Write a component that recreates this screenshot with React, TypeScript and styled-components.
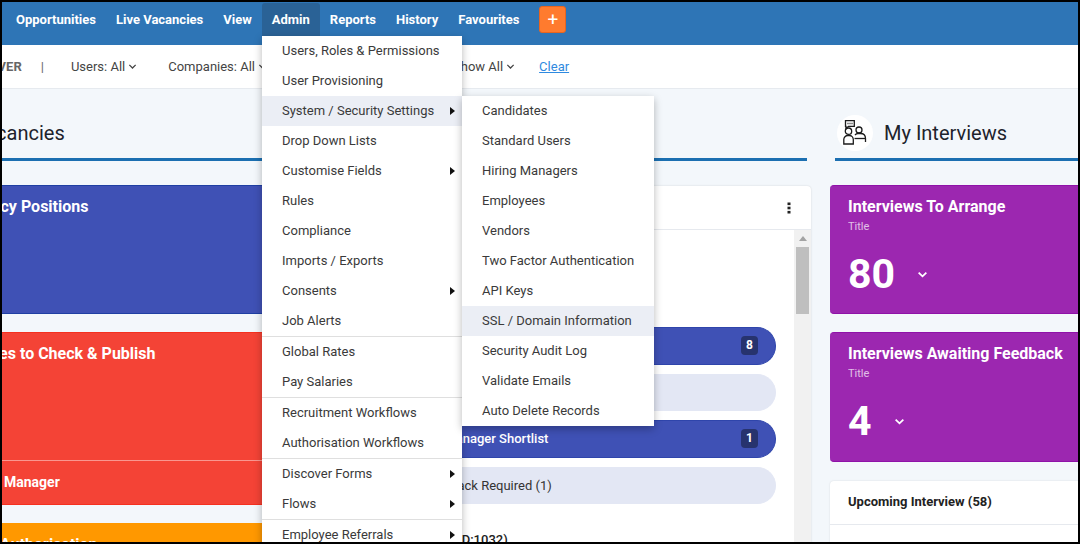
import { createGlobalStyle, styled } from "styled-components";

const GlobalStyle = createGlobalStyle`
  html, body {
    margin: 0;
    padding: 0;
    background: #000;
  }
  body {
    font-family: Roboto, "Liberation Sans", sans-serif;
  }
`;

const Frame = styled.div`
  position: relative;
  box-sizing: border-box;
  width: 1080px;
  height: 544px;
  border: 2px solid #000;
  overflow: hidden;
  background: #f3f7fb;
`;

const NavBar = styled.nav`
  display: flex;
  align-items: flex-start;
  height: 43px;
  padding-left: 4px;
  background: #2e75b6;
`;

const NavItem = styled.a<{ $active?: boolean }>`
  box-sizing: border-box;
  height: 33px;
  margin-top: 1px;
  padding: 0 10px;
  line-height: 33px;
  font-size: 13px;
  font-weight: 700;
  color: #fff;
  border-radius: 3px 3px 0 0;
  background: ${({ $active }) => ($active ? "#2a6296" : "transparent")};
`;

const AddButton = styled.button`
  box-sizing: border-box;
  width: 27px;
  height: 27px;
  margin: 4px 0 0 10px;
  padding: 0;
  border: 1px solid #e8651f;
  border-radius: 3px;
  background: #ff7b2e;
  color: #fff;
  font-family: inherit;
  font-size: 19px;
  line-height: 24px;
`;

const FilterBar = styled.div`
  display: flex;
  align-items: center;
  box-sizing: border-box;
  height: 44px;
  margin-left: -42px;
  padding-bottom: 1px;
  background: #fff;
  border-bottom: 1px solid #e6eaef;
  font-size: 13px;
  color: #444;
`;

const FilterLabel = styled.span`
  font-weight: 700;
  color: #666;
`;

const FilterSep = styled.span`
  margin: 0 27px 0 19px;
  color: #666;
`;

const Filter = styled.span<{ $gap: number }>`
  display: inline-flex;
  align-items: center;
  gap: 3px;
  margin-right: ${({ $gap }) => $gap}px;
  white-space: nowrap;
`;

const ClearLink = styled.a`
  color: #2f8ae0;
  text-decoration: underline;
`;

const Columns = styled.div`
  display: flex;
  margin-left: -250px;
`;

const Column = styled.section<{ $width: number; $gap?: number }>`
  flex: none;
  width: ${({ $width }) => $width}px;
  margin-right: ${({ $gap }) => $gap ?? 0}px;
`;

const SectionHead = styled.header<{ $trim?: number }>`
  display: flex;
  align-items: center;
  gap: 11px;
  box-sizing: border-box;
  height: 72px;
  margin-right: ${({ $trim }) => $trim ?? 0}px;
  padding-top: 18px;
  border-bottom: 3px solid #1b6fb1;
  font-size: 20px;
  color: #1d232c;
`;

const SectionTitle = styled.span<{ $indent?: number }>`
  margin-left: ${({ $indent }) => $indent ?? 0}px;
  white-space: nowrap;
`;

const IconCircle = styled.span`
  display: flex;
  align-items: center;
  justify-content: center;
  width: 36px;
  height: 36px;
  margin-left: 2px;
  border-radius: 50%;
  background: #fff;
`;

const Stack = styled.div<{ $pull?: number }>`
  display: flex;
  flex-direction: column;
  margin-left: ${({ $pull }) => -($pull ?? 0)}px;
  padding-top: 24px;
`;

const Tile = styled.div<{ $color: string; $edge: string; $height: number }>`
  position: relative;
  box-sizing: border-box;
  height: ${({ $height }) => $height}px;
  margin-bottom: 18px;
  padding: 11px 18px;
  border-top: 1px solid ${({ $edge }) => $edge};
  border-bottom: 1px solid ${({ $edge }) => $edge};
  border-radius: 4px;
  background: ${({ $color }) => $color};
  color: #fff;
  overflow: hidden;
`;

const TileTitle = styled.div<{ $indent?: number }>`
  margin-left: ${({ $indent }) => $indent ?? 0}px;
  font-size: 16px;
  line-height: 20px;
  font-weight: 700;
  white-space: nowrap;
`;

const TileSub = styled.div`
  margin-top: 3px;
  font-size: 11px;
  line-height: 14px;
  opacity: 0.7;
`;

const TileValue = styled.div`
  display: flex;
  align-items: center;
  gap: 22px;
  margin-top: 15px;
  font-size: 41px;
  line-height: 50px;
  font-weight: 700;
`;

const TileFoot = styled.div`
  position: absolute;
  left: 0;
  right: 0;
  bottom: 0;
  height: 43px;
  padding: 0 18px;
  border-top: 1px solid rgba(255, 255, 255, 0.45);
  font-size: 14px;
  line-height: 42px;
  font-weight: 700;
`;

const FootLabel = styled.span`
  display: block;
  margin-left: 234px;
  white-space: nowrap;
`;

const Panel = styled.div`
  height: 400px;
  margin-top: 1px;
  border-radius: 4px;
  background: #fff;
  box-shadow: 0 0 2px rgba(0, 0, 0, 0.15);
`;

const PanelHead = styled.div`
  display: flex;
  justify-content: flex-end;
  align-items: center;
  box-sizing: border-box;
  height: 44px;
  padding-right: 20px;
  border-bottom: 1px solid #e6e9ee;
  color: #222;
`;

const PanelBody = styled.div`
  display: flex;
  height: 356px;
`;

const PanelList = styled.div`
  flex: 1;
  padding: 97px 18px 0 0;
`;

const Pill = styled.div<{ $filled?: boolean; $inset: number }>`
  display: flex;
  align-items: center;
  justify-content: space-between;
  box-sizing: border-box;
  height: 37.5px;
  margin-bottom: 9px;
  padding: 0 17px 0 ${({ $inset }) => $inset}px;
  border: 1px solid ${({ $filled }) => ($filled ? "#2f45ab" : "#e3e7f4")};
  border-left: 0;
  border-radius: 0 19px 19px 0;
  background: ${({ $filled }) => ($filled ? "#3f51b5" : "#e3e7f4")};
  color: ${({ $filled }) => ($filled ? "#fff" : "#333")};
  font-size: 13px;
  font-weight: ${({ $filled }) => ($filled ? 500 : 400)};
  white-space: nowrap;
`;

const PillBadge = styled.span`
  width: 17px;
  height: 19px;
  border-radius: 4px;
  background: #27336e;
  color: #fff;
  font-size: 12px;
  line-height: 19px;
  font-weight: 700;
  text-align: center;
`;

const ListNote = styled.div`
  margin-top: 28px;
  padding-left: 135px;
  font-size: 13px;
  font-weight: 500;
  color: #222;
  white-space: nowrap;
`;

const Scrollbar = styled.div`
  flex: none;
  display: flex;
  flex-direction: column;
  align-items: center;
  width: 17px;
  background: #f1f1f1;
`;

const ScrollArrow = styled.span`
  width: 0;
  height: 0;
  margin: 6px 0 6px;
  border-left: 4px solid transparent;
  border-right: 4px solid transparent;
  border-bottom: 5px solid #a3a3a3;
`;

const ScrollThumb = styled.span`
  width: 13px;
  height: 67px;
  background: #bfbfbf;
`;

const UpcomingCard = styled.div`
  height: 100px;
  margin-top: 1px;
  border-radius: 4px 4px 0 0;
  background: #fff;
  box-shadow: 0 0 2px rgba(0, 0, 0, 0.12);
`;

const UpcomingHead = styled.div`
  box-sizing: border-box;
  height: 44px;
  padding-left: 18px;
  border-bottom: 1px solid #e6e9ee;
  font-size: 13px;
  line-height: 41px;
  font-weight: 700;
  color: #222;
`;

const Menu = styled.ul<{ $left: number; $top: number; $width: number }>`
  position: absolute;
  left: ${({ $left }) => $left}px;
  top: ${({ $top }) => $top}px;
  width: ${({ $width }) => $width}px;
  margin: 0;
  padding: 0;
  list-style: none;
  background: #fff;
  box-shadow: 0 3px 8px rgba(0, 0, 0, 0.28);
`;

const MenuItem = styled.li<{ $current?: boolean; $divided?: boolean; $arrow?: boolean }>`
  position: relative;
  box-sizing: content-box;
  height: 30px;
  padding-left: 20px;
  border-top: ${({ $divided }) => ($divided ? "1px solid #dfdfdf" : "0")};
  background: ${({ $current }) => ($current ? "#ebeef5" : "transparent")};
  font-size: 13px;
  line-height: 29px;
  color: #3a3a3a;
  white-space: nowrap;

  &::after {
    content: "";
    display: ${({ $arrow }) => ($arrow ? "block" : "none")};
    position: absolute;
    right: 7px;
    top: 11px;
    border-top: 4px solid transparent;
    border-bottom: 4px solid transparent;
    border-left: 5px solid #111;
  }
`;

const Chevron = ({ size = 10, width = 1.4 }: { size?: number; width?: number }) => (
  <svg width={size} height={size} viewBox="0 0 10 10" fill="none" stroke="currentColor" strokeWidth={width}>
    <path d="M1.5 3.2 5 6.7l3.5-3.5" />
  </svg>
);

const KebabIcon = () => (
  <svg width="4" height="12" viewBox="0 0 4 12" fill="currentColor">
    <rect x="0.5" y="0.5" width="3" height="2.6" />
    <rect x="0.5" y="4.7" width="3" height="2.6" />
    <rect x="0.5" y="8.9" width="3" height="2.6" />
  </svg>
);

const InterviewIcon = () => (
  <svg width="24" height="25" viewBox="0 0 24 25" fill="none" stroke="#1c1c1c" strokeWidth="1.3">
    <path d="M2.5.7h8.800v5.600H5.500L3 8.500V6.300h-.5z" />
    <path d="M4.500 3.500h1M6.500 3.500h1M8.500 3.500h1" />
    <circle cx="5.500" cy="11.200" r="3.200" />
    <path d="M.8 24v-4.500a4 4 0 0 1 4-4h1.500a4 4 0 0 1 4 4V24z" />
    <circle cx="16" cy="10" r="3" />
    <path d="M12 15c.8-1 1.800-1.500 3-1.500h2.500c3 0 5 2 5 5v3.500" />
    <path d="M11.500 18.500h11" />
  </svg>
);

const adminGroups = [
  [
    { label: "Users, Roles & Permissions" },
    { label: "User Provisioning" },
    { label: "System / Security Settings", arrow: true, current: true },
    { label: "Drop Down Lists" },
    { label: "Customise Fields", arrow: true },
    { label: "Rules" },
    { label: "Compliance" },
    { label: "Imports / Exports" },
    { label: "Consents", arrow: true },
    { label: "Job Alerts" },
  ],
  [{ label: "Global Rates" }, { label: "Pay Salaries" }],
  [{ label: "Recruitment Workflows" }, { label: "Authorisation Workflows" }],
  [
    { label: "Discover Forms", arrow: true },
    { label: "Flows", arrow: true },
  ],
  [{ label: "Employee Referrals", arrow: true }],
];

const securityItems = [
  "Candidates",
  "Standard Users",
  "Hiring Managers",
  "Employees",
  "Vendors",
  "Two Factor Authentication",
  "API Keys",
  "SSL / Domain Information",
  "Security Audit Log",
  "Validate Emails",
  "Auto Delete Records",
];

const navItems = ["Opportunities", "Live Vacancies", "View", "Admin", "Reports", "History", "Favourites"];

export default function App() {
  return (
    <>
      <GlobalStyle />
      <Frame>
        <NavBar>
          {navItems.map((item) => (
            <NavItem key={item} $active={item === "Admin"}>
              {item}
            </NavItem>
          ))}
          <AddButton>+</AddButton>
        </NavBar>

        <FilterBar>
          <FilterLabel>DISCOVER</FilterLabel>
          <FilterSep>|</FilterSep>
          <Filter $gap={31}>
            Users: All <Chevron size={9} />
          </Filter>
          <Filter $gap={186}>
            Companies: All <Chevron size={9} />
          </Filter>
          <Filter $gap={24}>
            Show All <Chevron size={9} />
          </Filter>
          <ClearLink>Clear</ClearLink>
        </FilterBar>

        <Columns>
          <Column $width={514}>
            <SectionHead>
              <SectionTitle $indent={189}>My Vacancies</SectionTitle>
            </SectionHead>
            <Stack>
              <Tile $color="#3f51b5" $edge="#1f3fa3" $height={129}>
                <TileTitle $indent={186}>Vacancy Positions</TileTitle>
              </Tile>
              <Tile $color="#f44336" $edge="#f5301f" $height={173}>
                <TileTitle $indent={172}>Vacancies to Check &amp; Publish</TileTitle>
                <TileFoot>
                  <FootLabel>Manager</FootLabel>
                </TileFoot>
              </Tile>
              <Tile $color="#ff9800" $edge="#ff9800" $height={100}>
                <TileTitle $indent={230}>Authorisation</TileTitle>
              </Tile>
            </Stack>
          </Column>
          <Column $width={545} $gap={24}>
            <SectionHead $trim={4} />
            <Stack>
              <Panel>
                <PanelHead>
                  <KebabIcon />
                </PanelHead>
                <PanelBody>
                  <PanelList>
                    <Pill $filled $inset={140}>
                      <span />
                      <PillBadge>8</PillBadge>
                    </Pill>
                    <Pill $inset={156} />
                    <Pill $filled $inset={140}>
                      <span>Hiring Manager Shortlist</span>
                      <PillBadge>1</PillBadge>
                    </Pill>
                    <Pill $inset={156}>
                      <span>Feedback Required (1)</span>
                    </Pill>
                    <ListNote>Vacancy (ID:1032)</ListNote>
                  </PanelList>
                  <Scrollbar>
                    <ScrollArrow />
                    <ScrollThumb />
                  </Scrollbar>
                </PanelBody>
              </Panel>
            </Stack>
          </Column>
          <Column $width={250}>
            <SectionHead>
              <IconCircle>
                <InterviewIcon />
              </IconCircle>
              <SectionTitle>My Interviews</SectionTitle>
            </SectionHead>
            <Stack $pull={5}>
              <Tile $color="#9c27b0" $edge="#8f12a8" $height={129}>
                <TileTitle>Interviews To Arrange</TileTitle>
                <TileSub>Title</TileSub>
                <TileValue>
                  80 <Chevron size={11} width={1.6} />
                </TileValue>
              </Tile>
              <Tile $color="#9c27b0" $edge="#8f12a8" $height={130}>
                <TileTitle>Interviews Awaiting Feedback</TileTitle>
                <TileSub>Title</TileSub>
                <TileValue>
                  4 <Chevron size={11} width={1.6} />
                </TileValue>
              </Tile>
              <UpcomingCard>
                <UpcomingHead>Upcoming Interview (58)</UpcomingHead>
              </UpcomingCard>
            </Stack>
          </Column>
        </Columns>

        <Menu $left={260} $top={34} $width={200}>
          {adminGroups.map((group, groupIndex) =>
            group.map((item, itemIndex) => (
              <MenuItem
                key={item.label}
                $divided={groupIndex > 0 && itemIndex === 0}
                $arrow={item.arrow}
                $current={item.current}
              >
                {item.label}
              </MenuItem>
            )),
          )}
        </Menu>

        <Menu $left={460} $top={94} $width={192}>
          {securityItems.map((item) => (
            <MenuItem key={item} $current={item.startsWith("SSL")}>
              {item}
            </MenuItem>
          ))}
        </Menu>
      </Frame>
    </>
  );
}
